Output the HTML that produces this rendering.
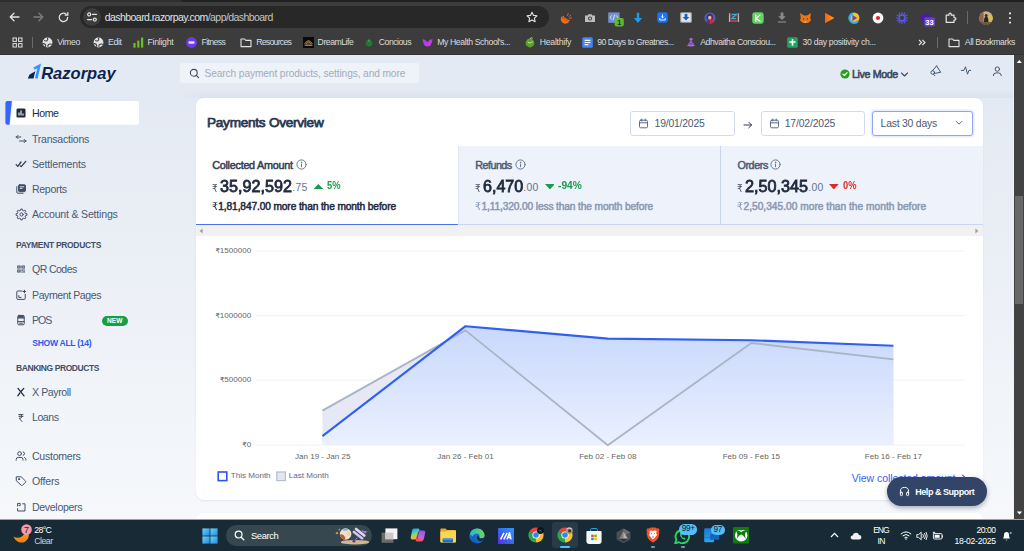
<!DOCTYPE html>
<html lang="en">
<head>
<meta charset="utf-8">
<title>Razorpay Dashboard</title>
<style>
*{box-sizing:border-box;margin:0;padding:0}
html,body{width:1024px;height:551px;overflow:hidden;background:#e4eaf3;font-family:"Liberation Sans",Arial,sans-serif;}
.abs{position:absolute}
#root{position:relative;width:1024px;height:551px;overflow:hidden;background:#e4eaf3}
/* ---------- browser chrome ---------- */
#chrome{position:absolute;left:0;top:0;width:1024px;height:55px;background:#3c3c3c;color:#e8e8e8}
#tabstrip{position:absolute;left:0;top:0;width:1024px;height:1.5px;background:linear-gradient(90deg,#2e2e2e 0,#2e2e2e 180px,#202020 184px)}
#omni{position:absolute;left:80px;top:6px;width:469px;height:22px;border-radius:11px;background:#282828}
#omni .site{position:absolute;left:3px;top:2px;width:18px;height:18px;border-radius:9px;background:#3c3c3c}
#url{position:absolute;left:24.8px;top:4px;font-size:10.5px;line-height:14px;color:#e2e2e2;letter-spacing:-0.565px;white-space:nowrap}
#url span{color:#c4c4c4}
.bm{position:absolute;top:36px;font-size:9.6px;line-height:12px;color:#dcdcdc;white-space:nowrap;letter-spacing:-0.15px}
/* ---------- page ---------- */
#page{position:absolute;left:0;top:55px;width:1013.5px;height:464px;background:linear-gradient(180deg,#e4eaf3 0px,#e4eaf3 45px,#f6f8fb 464px);overflow:hidden;border-right:1px solid #edf2fa}
#vscroll{position:absolute;left:1013.5px;top:55px;width:10.5px;height:464px;background:#424242}
#vscroll .thumb{position:absolute;left:1px;top:141px;width:8.5px;height:108px;background:#686868}
.nav{position:absolute;left:32px;font-size:10.6px;line-height:14px;color:#4a5a73;white-space:nowrap}
.navh{position:absolute;left:16px;font-size:8.5px;line-height:10px;font-weight:bold;color:#3f4f68;white-space:nowrap;letter-spacing:0.1px}
.ico{position:absolute;left:15px;width:12px;height:12px}
#card{position:absolute;left:196px;top:43px;width:787px;height:402px;background:#fff;border-radius:8px;box-shadow:0 1px 2px rgba(120,140,180,.16)}
.tab{position:absolute;top:48px;height:78px}
.tl{position:absolute;left:16px;top:12px;font-size:10.4px;line-height:13px;color:#3a4861;font-weight:bold;white-space:nowrap}
.amt{position:absolute;left:16px;top:29px;height:22px;white-space:nowrap;color:#1f2a3d}
.sub{position:absolute;left:16px;top:54px;font-size:10.1px;line-height:13px;white-space:nowrap}
.ax{font-family:"Liberation Sans",Arial,sans-serif;font-size:8.05px;fill:#666}
/* ---------- taskbar ---------- */
#taskbar{position:absolute;left:0;top:519px;width:1024px;height:32px;background:#172a35;color:#fff}
</style>
</head>
<body>
<div id="root">

<!-- ================= BROWSER CHROME ================= -->
<div id="chrome">
  <div id="tabstrip"></div><div class="abs" style="left:0;top:54px;width:1024px;height:1px;background:#343434"></div>
  <div id="omni">
    <div class="site"></div>
    <div id="url">dashboard.razorpay.com<span>/app/dashboard</span></div>
  </div>
  <!--CHROME-ICONS-->
<svg class="abs" style="left:8px;top:11px" width="13" height="12" viewBox="0 0 13 12" fill="none" stroke="#e3e3e3" stroke-width="1.3" stroke-linecap="round" stroke-linejoin="round"><path d="M11 6 H2.4 M6 2.2 L2.2 6 L6 9.8"/></svg>
<svg class="abs" style="left:32px;top:11px" width="13" height="12" viewBox="0 0 13 12" fill="none" stroke="#7d7d7d" stroke-width="1.3" stroke-linecap="round" stroke-linejoin="round"><path d="M2 6 H10.6 M7 2.2 L10.8 6 L7 9.8"/></svg>
<svg class="abs" style="left:56.5px;top:10.5px" width="13" height="13" viewBox="0 0 13 13" fill="none" stroke="#e3e3e3" stroke-width="1.3" stroke-linecap="round" stroke-linejoin="round"><path d="M10.6 6.5 A4.2 4.2 0 1 1 9.2 3.3"/><path d="M10.8 1.6 V4.2 H8.2" /></svg>
<svg class="abs" style="left:85.6px;top:11.4px" width="12" height="12" viewBox="0 0 12 12" fill="none" stroke="#e3e3e3" stroke-width="1.2" stroke-linecap="round"><circle cx="3.2" cy="3.4" r="1.5"/><path d="M6.4 3.4 H10.4"/><circle cx="8.8" cy="8.6" r="1.5"/><path d="M1.6 8.6 H5.6"/></svg>
<svg class="abs" style="left:526.2px;top:11px" width="12" height="12" viewBox="0 0 12 12" fill="none" stroke="#e3e3e3" stroke-width="1.1" stroke-linejoin="round"><path d="M6 1.2 L7.5 4.4 L11 4.8 L8.4 7.2 L9.1 10.7 L6 8.9 L2.9 10.7 L3.6 7.2 L1 4.8 L4.5 4.4 Z"/></svg>
<svg class="abs" style="left:559.7px;top:11.6px" width="12" height="12" viewBox="0 0 12 12" ><path d="M1.6 4.6 A4.5 4.5 0 1 0 9.2 9.4 Q4.4 8.8 1.6 4.6Z" fill="#f26a1b"/><path d="M2.6 4.2 Q5 8 9.6 8.6" stroke="#f26a1b" stroke-width="1.3" fill="none"/><path d="M7.4 3.4 L8.2 1.6 M9 4.6 L10.6 3.2 M9.8 6.4 L11.6 5.8" stroke="#f26a1b" stroke-width="1" stroke-linecap="round"/></svg>
<svg class="abs" style="left:583.8px;top:12.6px" width="12" height="10" viewBox="0 0 12 10" ><path d="M1 2.6 H3.6 L4.4 1.2 H7.6 L8.4 2.6 H11 V9 H1Z" fill="#bdbdbd"/><circle cx="6" cy="5.6" r="2" fill="#3c3c3c"/><circle cx="6" cy="5.6" r="1.1" fill="#bdbdbd"/></svg>
<svg class="abs" style="left:608.0px;top:11.7px" width="16" height="15" viewBox="0 0 16 15" ><rect x="0.2" y="0.4" width="11.4" height="10.4" fill="#6f8fd0"/><path d="M3.6 3.4 L2 5.4 L3.6 7.4 M8.2 3.4 L9.8 5.4 L8.2 7.4 M6.6 2.6 L5.2 8.2" stroke="#e8eefc" stroke-width="0.9" fill="none"/><rect x="6.6" y="6" width="9.2" height="8.6" rx="2" fill="#5fb82e"/><text x="11.2" y="13" font-size="7.4" font-weight="bold" fill="#16330a" text-anchor="middle" font-family="Liberation Sans, sans-serif">1</text></svg>
<svg class="abs" style="left:632.6px;top:11.6px" width="10" height="12" viewBox="0 0 10 12" ><path d="M3.8 0.8 H6.2 V6 H9.2 L5 11 L0.8 6 H3.8Z" fill="#1e9be8"/></svg>
<svg class="abs" style="left:656.7px;top:12.1px" width="11" height="11" viewBox="0 0 11 11" ><rect x="0.3" y="0.3" width="10.4" height="10.4" rx="2.4" fill="#1a73ff"/><path d="M5.5 2.4 V5.6 M4.2 4.6 L5.5 5.9 L6.8 4.6 M2.8 6 V8 H8.2 V6" stroke="#fff" stroke-width="0.9" fill="none"/></svg>
<svg class="abs" style="left:679.6px;top:12.1px" width="12" height="11" viewBox="0 0 12 11" ><rect x="0.7" y="0.7" width="10.6" height="9.6" rx="0.8" fill="#e4e6e8" stroke="#9aa0a6" stroke-width="1.1"/><path d="M4.6 2 H7.4 V5 H9.4 L6 8.6 L2.6 5 H4.6Z" fill="#1565c0"/></svg>
<svg class="abs" style="left:703.7px;top:11.6px" width="12" height="12" viewBox="0 0 12 12" ><defs><clipPath id="a7"><circle cx="6" cy="6" r="5.6"/></clipPath></defs><circle cx="6" cy="6" r="5.6" fill="#3b63d6"/><g clip-path="url(#a7)"><path d="M2.6 6.4 Q2.2 2 6 1.8 Q9.4 2 9 6.6 L7.6 8 H4Z" fill="#5a2848"/><ellipse cx="5.8" cy="5.8" rx="1.7" ry="2" fill="#e8b4a4"/><rect x="5.6" y="7.6" width="5" height="4.6" fill="#d02a3a"/><rect x="2.6" y="8.4" width="3.4" height="4" fill="#7a2a5a"/></g></svg>
<svg class="abs" style="left:728.0px;top:12.1px" width="12" height="11" viewBox="0 0 12 11" ><path d="M1.6 1.2 V10 M10.4 1.2 V10" stroke="#b8b8b8" stroke-width="1.4"/><path d="M1.6 2.6 Q6 6.4 10.4 2.6" stroke="#e03048" stroke-width="1.1" fill="none"/><path d="M3.6 2.4 H8.2 L3.8 6.6 H8.4" stroke="#2ab4d8" stroke-width="1.3" fill="none"/><rect x="2.6" y="8.2" width="6.8" height="1.8" fill="#e03048"/></svg>
<svg class="abs" style="left:751.9px;top:11.6px" width="12" height="12" viewBox="0 0 12 12" ><rect x="0.3" y="0.3" width="11.4" height="11.4" rx="2.6" fill="#66d166"/><path d="M3.8 2.6 V9.4 M8.4 2.6 L4.2 6.4 L8.6 9.4" stroke="#fff" stroke-width="1.2" fill="none"/></svg>
<svg class="abs" style="left:776.8px;top:12.1px" width="10" height="11" viewBox="0 0 10 11" ><path d="M3.6 0.6 H6.4 V4.2 H8.8 L5 8 L1.2 4.2 H3.6Z" fill="#8a8a8a"/><path d="M1 10 H9" stroke="#8a8a8a" stroke-width="1.2"/></svg>
<svg class="abs" style="left:799.4px;top:11.6px" width="13" height="12" viewBox="0 0 13 12" ><path d="M1 1 L5 3.4 H8 L12 1 L11.2 6 L12 8.4 L9 11 H4 L1 8.4 L1.8 6 Z" fill="#e8761b"/><path d="M4 6.6 L5.2 7.4 M9 6.6 L7.8 7.4" stroke="#3a2a20" stroke-width="1"/><path d="M5 9.6 H8 L6.5 11Z" fill="#d5c0b0"/></svg>
<svg class="abs" style="left:824.0px;top:11.6px" width="11" height="12" viewBox="0 0 11 12" ><defs><linearGradient id="pl" x1="0" y1="0" x2="1" y2="0"><stop offset="0" stop-color="#ff5a1a"/><stop offset="1" stop-color="#ffa400"/></linearGradient></defs><path d="M1 0.8 L10.4 6 L1 11.2Z" fill="url(#pl)"/></svg>
<svg class="abs" style="left:847.6px;top:11.6px" width="12" height="12" viewBox="0 0 12 12" ><circle cx="6.2" cy="5.8" r="5.2" fill="#ffc21a"/><path d="M5 1.4 A4.8 4.8 0 1 0 10 9" stroke="#22b8e8" stroke-width="2.2" fill="none"/><path d="M4.4 3 L9.2 6 L4.4 9Z" fill="#6a3fe0"/></svg>
<svg class="abs" style="left:871.8px;top:11.6px" width="12" height="12" viewBox="0 0 12 12" ><circle cx="6" cy="6" r="5.4" fill="#fff"/><circle cx="6" cy="6" r="2.1" fill="#e8202a"/></svg>
<svg class="abs" style="left:896.4px;top:11.6px" width="12" height="12" viewBox="0 0 12 12" ><circle cx="6" cy="6" r="2.9" fill="none" stroke="#5d58e6" stroke-width="1.5"/><path d="M9.90 6.00 L11.60 6.00 M9.38 7.95 L10.85 8.80 M7.95 9.38 L8.80 10.85 M6.00 9.90 L6.00 11.60 M4.05 9.38 L3.20 10.85 M2.62 7.95 L1.15 8.80 M2.10 6.00 L0.40 6.00 M2.62 4.05 L1.15 3.20 M4.05 2.62 L3.20 1.15 M6.00 2.10 L6.00 0.40 M7.95 2.62 L8.80 1.15 M9.38 4.05 L10.85 3.20" stroke="#5d58e6" stroke-width="1.15" stroke-linecap="round"/></svg>
<svg class="abs" style="left:918.5px;top:11.5px" width="17" height="15" viewBox="0 0 17 15" ><path d="M0.8 6.4 L6.6 0.8 L12 3.6 L9.4 9 L3 9.6Z" fill="#4a1aa8"/><rect x="5.2" y="5.2" width="10.8" height="9.2" rx="1.6" fill="#6a3fc8"/><text x="10.6" y="12.6" font-size="7.6" font-weight="bold" fill="#fff" text-anchor="middle" font-family="Liberation Sans, sans-serif">33</text></svg>
<svg class="abs" style="left:943.6px;top:11.1px" width="13" height="13" viewBox="0 0 13 13" ><path d="M2.2 4.2 H4.9 V3.5 Q4.9 2 6.1 2 Q7.3 2 7.3 3.5 V4.2 H10 V6.5 H10.5 Q11.9 6.5 11.9 7.8 Q11.9 9.1 10.5 9.1 H10 V11.4 H2.2Z" fill="none" stroke="#e3e3e3" stroke-width="1.25" stroke-linejoin="round"/></svg>
<div class="abs" style="left:967.4px;top:11px;width:1px;height:13px;background:#6a6a6a"></div>
<svg class="abs" style="left:978.7px;top:10.6px" width="14" height="14" viewBox="0 0 14 14" ><defs><clipPath id="av"><circle cx="7" cy="7" r="6.8"/></clipPath></defs><g clip-path="url(#av)"><rect width="14" height="14" fill="#c8b48a"/><rect x="0" y="0" width="4.6" height="14" fill="#8a6a4a"/><rect x="9.6" y="4" width="4.4" height="5" fill="#d8c23a"/><ellipse cx="7.2" cy="10" rx="2.2" ry="4.6" fill="#2a2622"/><circle cx="7.2" cy="4.6" r="1.5" fill="#3a3028"/><rect x="0" y="11" width="14" height="3" fill="#6a5a3a"/></g></svg>
<svg class="abs" style="left:1007.6px;top:10.6px" width="4" height="14" viewBox="0 0 4 14" ><circle cx="2" cy="2.4" r="1.1" fill="#e3e3e3"/><circle cx="2" cy="7" r="1.1" fill="#e3e3e3"/><circle cx="2" cy="11.6" r="1.1" fill="#e3e3e3"/></svg>
<!--/CHROME-ICONS-->
  <!--BOOKMARKS-->
<svg class="abs" style="left:11.7px;top:36.5px" width="11" height="11" viewBox="0 0 11 11" ><g fill="none" stroke="#e3e3e3" stroke-width="1"><rect x="1" y="1" width="3.4" height="3.4"/><rect x="6.6" y="1" width="3.4" height="3.4"/><rect x="1" y="6.6" width="3.4" height="3.4"/><rect x="6.6" y="6.6" width="3.4" height="3.4"/></g></svg>
<div class="abs" style="left:32.2px;top:37px;width:1px;height:10.5px;background:#6a6a6a"></div>
<svg class="abs" style="left:42.4px;top:36.5px" width="11" height="11" viewBox="0 0 11 11" ><circle cx="5.5" cy="5.5" r="4.9" fill="#e3e3e3"/><path d="M2.2 3.4 Q4 4.6 5 3.6 Q6.4 2.2 5.2 1 M6 10 Q5.4 8 7 7.2 Q9 6.6 10 7.4 M1 6.6 Q3 6.4 3.6 8 Q4 9.2 3.4 9.8" stroke="#3c3c3c" stroke-width="1.1" fill="none"/></svg>
<div class="bm" style="left:57.2px;font-size:8.7px;letter-spacing:-0.341px">Vimeo</div>
<svg class="abs" style="left:93.1px;top:36.5px" width="11" height="11" viewBox="0 0 11 11" ><circle cx="5.5" cy="5.5" r="4.9" fill="#e3e3e3"/><path d="M2.2 3.4 Q4 4.6 5 3.6 Q6.4 2.2 5.2 1 M6 10 Q5.4 8 7 7.2 Q9 6.6 10 7.4 M1 6.6 Q3 6.4 3.6 8 Q4 9.2 3.4 9.8" stroke="#3c3c3c" stroke-width="1.1" fill="none"/></svg>
<div class="bm" style="left:108.0px;font-size:8.7px;letter-spacing:-0.373px">Edit</div>
<svg class="abs" style="left:132.7px;top:36.5px" width="11" height="11" viewBox="0 0 11 11" ><rect x="0.4" y="6" width="2.2" height="4.6" fill="#6ac21a"/><rect x="4.2" y="3.6" width="2.2" height="7" fill="#6ac21a"/><rect x="8" y="0.6" width="2.2" height="10" fill="#6ac21a"/></svg>
<div class="bm" style="left:147.5px;font-size:8.7px;letter-spacing:-0.268px">Finlight</div>
<svg class="abs" style="left:186.4px;top:36.5px" width="11" height="11" viewBox="0 0 11 11" ><circle cx="5.5" cy="5.5" r="5.4" fill="#6a3de8"/><rect x="2.4" y="4.2" width="6.2" height="2.6" rx="1.2" fill="#e6dcff"/></svg>
<div class="bm" style="left:201.6px;font-size:8.7px;letter-spacing:-0.634px">Fitness</div>
<svg class="abs" style="left:239.7px;top:36.5px" width="12" height="11" viewBox="0 0 12 11" ><path d="M1 2 H4.6 L5.8 3.4 H11 V9.6 H1Z" fill="none" stroke="#e3e3e3" stroke-width="1.1" stroke-linejoin="round"/></svg>
<div class="bm" style="left:256.2px;font-size:8.7px;letter-spacing:-0.732px">Resources</div>
<svg class="abs" style="left:303.0px;top:36.5px" width="11" height="11" viewBox="0 0 11 11" ><rect width="11" height="11" fill="#0a0a0a"/><path d="M1.6 7 Q5.5 0.4 9.4 7 M3 7 Q5.5 2.8 8 7 M4.4 7 Q5.5 5 6.6 7" stroke="#c89a32" stroke-width="0.9" fill="none"/><path d="M1.6 8.2 H9.4" stroke="#c89a32" stroke-width="1.2"/></svg>
<div class="bm" style="left:317.6px;font-size:8.7px;letter-spacing:-0.481px">DreamLife</div>
<svg class="abs" style="left:365.2px;top:37.9px" width="8" height="9" viewBox="0 0 8 9" ><path d="M4 0.4 L5.4 2 Q7.6 3.4 7.4 5.8 Q7 8.6 4 8.6 Q1 8.6 0.6 5.8 Q0.4 3.4 2.6 2Z" fill="#1f7a30"/><path d="M4 1.6 L5.2 3.4 H2.8Z" fill="#4aa84a"/></svg>
<div class="bm" style="left:378.8px;font-size:8.7px;letter-spacing:-0.496px">Concious</div>
<svg class="abs" style="left:421.8px;top:37.5px" width="11" height="9" viewBox="0 0 11 9" ><defs><linearGradient id="bf" x1="0" y1="0" x2="1" y2="1"><stop offset="0" stop-color="#9a3af0"/><stop offset="1" stop-color="#d83ae0"/></linearGradient></defs><path d="M5.5 8.4 Q1.4 8.8 0.4 1 Q3.8 1.4 5.5 4.2 Q7.2 1.4 10.6 1 Q9.6 8.8 5.5 8.4Z" fill="url(#bf)"/></svg>
<div class="bm" style="left:437.2px;font-size:8.7px;letter-spacing:-0.402px">My Health School's...</div>
<svg class="abs" style="left:525.2px;top:36.5px" width="10" height="11" viewBox="0 0 10 11" ><circle cx="5" cy="6" r="4.4" fill="#5aa02c"/><path d="M5 1.6 Q6.6 0.4 7.6 1 M2.8 5 Q5 7.6 7.6 4.6" stroke="#d8e8b8" stroke-width="0.9" fill="none"/></svg>
<div class="bm" style="left:539.8px;font-size:8.7px;letter-spacing:-0.272px">Healthify</div>
<svg class="abs" style="left:581.8px;top:36.5px" width="11" height="11" viewBox="0 0 11 11" ><rect x="0.2" y="0.2" width="10.6" height="10.6" rx="1.6" fill="#4285f4"/><path d="M2.6 3.4 H8.4 M2.6 5.5 H8.4 M2.6 7.6 H6.4" stroke="#fff" stroke-width="1.1"/></svg>
<div class="bm" style="left:597.2px;font-size:8.7px;letter-spacing:-0.475px">90 Days to Greatnes...</div>
<svg class="abs" style="left:685.7px;top:37.0px" width="10" height="10" viewBox="0 0 10 10" ><circle cx="5" cy="2.2" r="1.5" fill="#a866f0"/><path d="M5 3.4 L8.2 7.6 H1.8Z" fill="#a866f0"/><path d="M0.6 8.4 Q5 6 9.4 8.4 Q5 10.4 0.6 8.4Z" fill="#a866f0"/><path d="M3.6 6.4 H6.4" stroke="#3c3c3c" stroke-width=".7"/></svg>
<div class="bm" style="left:700.2px;font-size:8.7px;letter-spacing:-0.435px">Adhvaitha Consciou...</div>
<svg class="abs" style="left:787.3px;top:36.5px" width="11" height="11" viewBox="0 0 11 11" ><rect x="0.2" y="0.2" width="10.6" height="10.6" rx="1.4" fill="#1fa463"/><path d="M5.5 2.2 V8.8 M2.4 5 H8.6" stroke="#fff" stroke-width="1.6"/></svg>
<div class="bm" style="left:802.6px;font-size:8.7px;letter-spacing:-0.328px">30 day positivity ch...</div>
<svg class="abs" style="left:917.8px;top:38.5px" width="8" height="7" viewBox="0 0 8 7" ><path d="M1 1 L3.6 3.5 L1 6 M4.4 1 L7 3.5 L4.4 6" fill="none" stroke="#e3e3e3" stroke-width="1.1"/></svg>
<div class="abs" style="left:937.4px;top:37px;width:1px;height:10.5px;background:#6a6a6a"></div>
<svg class="abs" style="left:947.8px;top:36.5px" width="12" height="11" viewBox="0 0 12 11" ><path d="M1 2 H4.6 L5.8 3.4 H11 V9.6 H1Z" fill="none" stroke="#e3e3e3" stroke-width="1.1" stroke-linejoin="round"/></svg>
<div class="bm" style="left:964.8px;font-size:8.7px;letter-spacing:-0.423px">All Bookmarks</div>
<!--/BOOKMARKS-->
</div>

<!-- ================= PAGE ================= -->
<div id="page">
  
  <!-- header -->
  <svg class="abs" style="left:24px;top:4px" width="100" height="30" viewBox="24 59 100 30">
    <polygon points="41,63.5 33.4,67.6 34.4,69.8 37.3,68.3 34.9,78.6 37.7,78.6" fill="#3395ff"/>
    <polygon points="27.7,78.6 29.6,74.4 35.3,71.2 33.5,78.6" fill="#0c2451"/>
    <text x="41.2" y="78.5" font-family="Liberation Sans, Arial, sans-serif" font-weight="bold" font-style="italic" font-size="16.2" fill="#0c2451" textLength="74.4" lengthAdjust="spacingAndGlyphs">Razorpay</text>
  </svg>
  <div class="abs" style="left:180px;top:7.5px;width:239px;height:20.5px;background:#eef2f9;border-radius:2px"></div>
  <svg class="abs" style="left:189px;top:12.5px" width="11" height="11" viewBox="0 0 11 11"><circle cx="4.8" cy="4.8" r="3.4" fill="none" stroke="#3b4a5f" stroke-width="1.1"/><path d="M7.3 7.3 L9.6 9.6" stroke="#3b4a5f" stroke-width="1.1" stroke-linecap="round"/></svg>
  <div class="abs" style="left:204.5px;top:11.8px;font-size:10.2px;line-height:14px;color:#a3acb9;white-space:nowrap;letter-spacing:-0.112px">Search payment products, settings, and more</div>
  <svg class="abs" style="left:840px;top:14px" width="10" height="10" viewBox="0 0 10 10"><circle cx="5" cy="5" r="4.6" fill="#2a9d1f"/><path d="M2.9 5.1 L4.4 6.5 L7.1 3.6" fill="none" stroke="#fff" stroke-width="1.2" stroke-linecap="round" stroke-linejoin="round"/></svg>
  <div class="abs" style="left:852px;top:11.5px;font-size:10.7px;line-height:14px;color:#3a4a63;-webkit-text-stroke:0.6px #3a4a63;white-space:nowrap;letter-spacing:-0.374px">Live Mode</div>
  <svg class="abs" style="left:900px;top:15.5px" width="9" height="7" viewBox="0 0 9 7"><path d="M1.5 2 L4.5 5 L7.5 2" fill="none" stroke="#3a4a63" stroke-width="1.1" stroke-linecap="round" stroke-linejoin="round"/></svg>
  <svg class="abs" style="left:929px;top:8px" width="14" height="14" viewBox="929 63 14 14" fill="none" stroke="#46586f" stroke-width="1" stroke-linejoin="round" stroke-linecap="round"><path d="M936.6 65.9 L940.7 72.3 L934.6 73.4 M936.6 65.9 L932.4 70.8"/><circle cx="932.7" cy="72.5" r="1.8"/><path d="M933.6 74.4 L934.9 75.8"/></svg>
  <svg class="abs" style="left:960px;top:8px" width="12" height="14" viewBox="960 63 12 14" fill="none" stroke="#46586f" stroke-width="1" stroke-linejoin="round" stroke-linecap="round"><path d="M961.3 70.4 H963.9 L965.5 66.8 L967.5 74.2 L968.9 70.4 H970.7"/></svg>
  <svg class="abs" style="left:991px;top:8px" width="13" height="14" viewBox="991 63 13 14" fill="none" stroke="#46586f" stroke-width="1" stroke-linecap="round"><circle cx="997.3" cy="69.1" r="2.2"/><path d="M993.3 75.6 Q993.3 72.9 996 72.9 H998.6 Q1001.3 72.9 1001.3 75.6"/></svg>
  <div class="abs" style="left:182px;top:34px;width:832px;height:9px;background:linear-gradient(rgba(219,226,237,0),#dbe2ed);-webkit-mask-image:linear-gradient(90deg,transparent,#000 24px);mask-image:linear-gradient(90deg,transparent,#000 24px)"></div>

  <!--SIDEBAR-->
<svg class="abs" style="left:5px;top:45px" width="136" height="26" viewBox="0 0 136 26"><path d="M7.6 1 H131.5 Q134 1 134 3.5 V22.2 Q134 24.7 131.5 24.7 H5.3 Z" fill="#fff"/><path d="M2.4 1 H6.8 L4.5 24.7 H2.4 Q0.4 24.7 0.4 22.7 V3 Q0.4 1 2.4 1Z" fill="#3366ff"/></svg>
<div class="nav" style="top:51.0px;letter-spacing:-0.436px;color:#1f2a3d;">Home</div>
<div class="nav" style="top:76.5px;letter-spacing:-0.263px">Transactions</div>
<div class="nav" style="top:101.5px;letter-spacing:-0.192px">Settlements</div>
<div class="nav" style="top:127.0px;letter-spacing:-0.345px">Reports</div>
<div class="nav" style="top:152.0px;letter-spacing:-0.215px">Account &amp; Settings</div>
<div class="nav" style="top:207.4px;letter-spacing:-0.607px">QR Codes</div>
<div class="nav" style="top:232.5px;letter-spacing:-0.440px">Payment Pages</div>
<div class="nav" style="top:257.8px;letter-spacing:-1.088px">POS</div>
<div class="nav" style="top:330.3px;letter-spacing:-0.413px">X Payroll</div>
<div class="nav" style="top:355.3px;letter-spacing:-0.467px">Loans</div>
<div class="nav" style="top:394.3px;letter-spacing:-0.287px">Customers</div>
<div class="nav" style="top:419.3px;letter-spacing:-0.205px">Offers</div>
<div class="nav" style="top:444.9px;letter-spacing:-0.340px">Developers</div>
<div class="navh" style="top:184.9px;letter-spacing:-0.325px">PAYMENT PRODUCTS</div>
<div class="navh" style="top:308.2px;letter-spacing:-0.420px">BANKING PRODUCTS</div>
<div class="abs" style="left:32.3px;top:282.9px;font-size:8.6px;line-height:10px;font-weight:bold;color:#2f5cf0;white-space:nowrap;letter-spacing:-0.313px">SHOW ALL (14)</div>
<div class="abs" style="left:101.6px;top:260.6px;width:26.4px;height:10.2px;border-radius:5.1px;background:#14a049;color:#fff;font-size:6.6px;line-height:10.4px;font-weight:bold;text-align:center">NEW</div>
<svg class="abs" style="left:15.2px;top:52.0px" width="12" height="12" viewBox="0 0 12 12" fill="none" stroke="#3f4d63" stroke-width="1" stroke-linecap="round" stroke-linejoin="round"><rect x="1.5" y="1.5" width="9" height="9" rx="1.3" fill="#1f2a3d" stroke="none"/><path d="M4 8.6 V5.4 M6 8.6 V3.6 M8 8.6 V6.6" stroke="#fff" stroke-width="1.1" stroke-linecap="butt"/></svg>
<svg class="abs" style="left:15.2px;top:77.5px" width="12" height="12" viewBox="0 0 12 12" fill="none" stroke="#3f4d63" stroke-width="1" stroke-linecap="round" stroke-linejoin="round"><path d="M1.4 4 H5.8 M1.4 4 L3 2.4 M1.4 4 L3 5.6 M4.6 8 H10.8 M10.8 8 L9.2 6.4 M10.8 8 L9.2 9.6"/></svg>
<svg class="abs" style="left:15.2px;top:102.8px" width="12" height="12" viewBox="0 0 12 12" fill="none" stroke="#3f4d63" stroke-width="1" stroke-linecap="round" stroke-linejoin="round"><path d="M1.2 6.6 L2.8 8.4 L6 4 M5.4 8 L6.2 8.6 L10.8 3.4" stroke-width="1.3" stroke="#2f3b50"/></svg>
<svg class="abs" style="left:15.2px;top:128.0px" width="12" height="12" viewBox="0 0 12 12" fill="none" stroke="#3f4d63" stroke-width="1" stroke-linecap="round" stroke-linejoin="round"><path d="M1.8 3.6 V9.4 Q1.8 10.2 2.6 10.2 H8.2"/><rect x="3.6" y="1.8" width="6.8" height="6.8" rx="0.8" fill="#3f4d63"/><path d="M5.2 3.8 H8.8 M5.2 5.4 H7" stroke="#e9eef5" stroke-width="0.9"/></svg>
<svg class="abs" style="left:14.7px;top:152.8px" width="13" height="13" viewBox="0 0 13 13" fill="none" stroke="#3f4d63" stroke-width="1" stroke-linecap="round" stroke-linejoin="round"><circle cx="6.5" cy="6.5" r="1.6"/><path d="M10.70 5.58 L11.95 5.75 L11.95 7.25 L10.70 7.42 L10.12 8.82 L10.89 9.82 L9.82 10.89 L8.82 10.12 L7.42 10.70 L7.25 11.95 L5.75 11.95 L5.58 10.70 L4.18 10.12 L3.18 10.89 L2.11 9.82 L2.88 8.82 L2.30 7.42 L1.05 7.25 L1.05 5.75 L2.30 5.58 L2.88 4.18 L2.11 3.18 L3.18 2.11 L4.18 2.88 L5.58 2.30 L5.75 1.05 L7.25 1.05 L7.42 2.30 L8.82 2.88 L9.82 2.11 L10.89 3.18 L10.12 4.18Z"/></svg>
<svg class="abs" style="left:15.2px;top:208.0px" width="12" height="12" viewBox="0 0 12 12" fill="none" stroke="#3f4d63" stroke-width="1" stroke-linecap="round" stroke-linejoin="round"><g fill="#3f4d63" stroke="none"><rect x="2.2" y="2.4" width="3.4" height="3.2" rx=".4"/><rect x="6.4" y="2.4" width="3.4" height="3.2" rx=".4"/><rect x="2.2" y="6.4" width="3.4" height="3.2" rx=".4"/><rect x="6.4" y="6.4" width="1.5" height="1.4"/><rect x="8.3" y="8.2" width="1.5" height="1.4"/><rect x="8.3" y="6.4" width="1.5" height="1.2"/><rect x="6.4" y="8.4" width="1.3" height="1.2"/></g><g fill="#e7ecf4" stroke="none"><rect x="3.3" y="3.4" width="1.2" height="1.2"/><rect x="7.5" y="3.4" width="1.2" height="1.2"/><rect x="3.3" y="7.4" width="1.2" height="1.2"/></g></svg>
<svg class="abs" style="left:15.2px;top:233.5px" width="12" height="12" viewBox="0 0 12 12" fill="none" stroke="#3f4d63" stroke-width="1" stroke-linecap="round" stroke-linejoin="round"><path d="M7 2 H2.6 Q1.8 2 1.8 2.8 V9.6 Q1.8 10.4 2.6 10.4 H9.4 Q10.2 10.4 10.2 9.6 V5.4 M9.4 1.2 V3.8 M8.1 2.5 H10.7 M3.8 6.6 V8.4 H6"/></svg>
<svg class="abs" style="left:15.2px;top:259.0px" width="12" height="12" viewBox="0 0 12 12" fill="none" stroke="#3f4d63" stroke-width="1" stroke-linecap="round" stroke-linejoin="round"><rect x="2.8" y="1.4" width="6.4" height="9.4" rx="1"/><path d="M2.8 4 H9.2 M2.8 7.6 H9.2 M4.6 9.2 H7.4" /><rect x="3.2" y="1.6" width="5.6" height="2.2" fill="#3f4d63" stroke="none"/></svg>
<svg class="abs" style="left:15.2px;top:331.0px" width="12" height="12" viewBox="0 0 12 12" fill="none" stroke="#3f4d63" stroke-width="1" stroke-linecap="round" stroke-linejoin="round"><path d="M3 2.4 L9 9.8 M8.8 2.4 L5.8 5.8 M4.8 7 L2.8 9.8" stroke-width="1.3" stroke="#1f2a3d"/></svg>
<svg class="abs" style="left:15.2px;top:356.6px" width="12" height="12" viewBox="0 0 12 12" fill="none" stroke="#3f4d63" stroke-width="1" stroke-linecap="round" stroke-linejoin="round"><path d="M4 2.6 H8 M4 4.4 H8 M4 2.6 H5 Q6.8 2.6 6.8 4.4 Q6.8 6.2 5 6.2 H4.2 L7 9.6" stroke-width="0.95"/></svg>
<svg class="abs" style="left:15.2px;top:395.0px" width="12" height="12" viewBox="0 0 12 12" fill="none" stroke="#3f4d63" stroke-width="1" stroke-linecap="round" stroke-linejoin="round"><circle cx="4.6" cy="3.6" r="1.9"/><path d="M1.2 10.2 V9.4 Q1.2 7.4 3.2 7.4 H6 Q8 7.4 8 9.4 V10.2 M8.2 1.9 Q9.6 2.3 9.6 3.6 Q9.6 4.9 8.2 5.3 M9.6 7.5 Q10.9 7.9 10.9 9.4 V10.2"/></svg>
<svg class="abs" style="left:15.2px;top:420.0px" width="12" height="12" viewBox="0 0 12 12" fill="none" stroke="#3f4d63" stroke-width="1" stroke-linecap="round" stroke-linejoin="round"><path d="M1.6 1.8 H6.2 L10.6 6.2 Q11 6.7 10.6 7.2 L7.4 10.4 Q6.9 10.8 6.4 10.4 L1.6 6 Z"/><circle cx="4" cy="4.2" r=".6" fill="#3f4d63"/></svg>
<svg class="abs" style="left:15.2px;top:445.6px" width="12" height="12" viewBox="0 0 12 12" fill="none" stroke="#3f4d63" stroke-width="1" stroke-linecap="round" stroke-linejoin="round"><path d="M7.6 2.8 H10 V10 H2.6 V7.6 M2.6 5 V2.4 H5.2 V4.6 H4"/></svg>
<!--/SIDEBAR-->
  <div id="card">
    <!--CARD-->
<div class="abs" style="left:11.0px;top:15.8px;font-size:13.6px;line-height:18px;font-weight:normal;color:#2a3850;letter-spacing:-0.260px;white-space:nowrap;-webkit-text-stroke:0.75px #2a3850;">Payments Overview</div>
<div class="abs" style="left:434.0px;top:12.5px;width:104.8px;height:25.0px;border:1px solid #d3dbea;border-radius:3px;background:#fff;"></div>
<svg class="abs" style="left:442.4px;top:19.5px" width="11" height="11" viewBox="0 0 11 11" fill="none" stroke="#5a6a85" stroke-width="1" stroke-linecap="round"><rect x="1.5" y="2.2" width="8" height="7.6" rx="1.2"/><path d="M1.5 4.8 H9.5 M3.8 1 V3 M7.2 1 V3"/></svg>
<div class="abs" style="left:458.6px;top:18.8px;font-size:10.4px;line-height:14px;font-weight:normal;color:#4a5a73;letter-spacing:-0.205px;white-space:nowrap;">19/01/2025</div>
<svg class="abs" style="left:547.4px;top:23.0px" width="10" height="8" viewBox="0 0 10 8" fill="none" stroke="#2f3b50" stroke-width="1" stroke-linecap="round" stroke-linejoin="round"><path d="M1 4 H8.6 M5.8 1.2 L8.6 4 L5.8 6.8"/></svg>
<div class="abs" style="left:564.5px;top:12.5px;width:104.5px;height:25.0px;border:1px solid #d3dbea;border-radius:3px;background:#fff;"></div>
<svg class="abs" style="left:572.5px;top:19.5px" width="11" height="11" viewBox="0 0 11 11" fill="none" stroke="#5a6a85" stroke-width="1" stroke-linecap="round"><rect x="1.5" y="2.2" width="8" height="7.6" rx="1.2"/><path d="M1.5 4.8 H9.5 M3.8 1 V3 M7.2 1 V3"/></svg>
<div class="abs" style="left:588.7px;top:18.8px;font-size:10.4px;line-height:14px;font-weight:normal;color:#4a5a73;letter-spacing:-0.145px;white-space:nowrap;">17/02/2025</div>
<div class="abs" style="left:676.0px;top:12.5px;width:101.0px;height:25.0px;border:1px solid #90a6f5;border-radius:3px;background:#fff;box-shadow:0 0 0 1.5px rgba(120,150,250,.18);"></div>
<div class="abs" style="left:684.6px;top:18.8px;font-size:10.4px;line-height:14px;font-weight:normal;color:#4a5a73;letter-spacing:-0.214px;white-space:nowrap;">Last 30 days</div>
<svg class="abs" style="left:759.0px;top:22.4px" width="8" height="6" viewBox="0 0 8 6" fill="none" stroke="#5a6a85" stroke-width="1" stroke-linecap="round" stroke-linejoin="round"><path d="M1.2 1.4 L4 4.2 L6.8 1.4"/></svg>
<div class="abs" style="left:262.2px;top:47.8px;width:524.6px;height:78.8px;background:#eef2fb;border-bottom:1px solid #c9d5f3;border-left:1px solid #dfe6f6"></div>
<div class="abs" style="left:524.2px;top:47.8px;width:1px;height:78.2px;background:#c9d3ea"></div>
<div class="abs" style="left:0;top:125.5px;width:262.4px;height:1.3px;background:#4a72f0"></div>
<div class="abs" style="left:0;top:127.0px;width:787px;height:11px;background:#f1f1f1"></div>
<svg class="abs" style="left:3.4px;top:129.6px" width="4" height="6" viewBox="0 0 4 6"><path d="M3.6 0.4 V5.6 L0.6 3Z" fill="#a0a0a0"/></svg>
<svg class="abs" style="left:779.0px;top:129.6px" width="4" height="6" viewBox="0 0 4 6"><path d="M0.4 0.4 V5.6 L3.4 3Z" fill="#a0a0a0"/></svg>
<div class="abs" style="left:16.2px;top:59.6px;font-size:10.8px;line-height:14px;font-weight:normal;color:#333f55;letter-spacing:-0.259px;white-space:nowrap;-webkit-text-stroke:0.5px #333f55;">Collected Amount</div>
<svg class="abs" style="left:99.8px;top:61.2px" width="11" height="11" viewBox="0 0 11 11" fill="none" stroke="#6b7a92" stroke-width="1" stroke-linecap="round"><circle cx="5.5" cy="5.5" r="4.6"/><path d="M5.5 5 V7.8"/><circle cx="5.5" cy="3.3" r=".3" fill="#6b7a92"/></svg>
<div class="abs" style="left:16.2px;top:82.8px;font-family:'DejaVu Sans',sans-serif;font-size:10.6px;line-height:14px;color:#4a5568;transform-origin:0 50%;transform:scaleX(0.831)">₹</div>
<div class="abs" style="left:24.0px;top:78.6px;font-size:15.7px;line-height:20px;font-weight:normal;color:#1f2a3d;letter-spacing:0.000px;white-space:nowrap;-webkit-text-stroke:0.8px #1f2a3d;transform-origin:0 50%;transform:scaleX(1.0308);">35,92,592</div>
<div class="abs" style="left:96.3px;top:83.0px;font-size:10.4px;line-height:14px;font-weight:normal;color:#66738a;letter-spacing:0.314px;white-space:nowrap;">.75</div>
<svg class="abs" style="left:116.8px;top:85.6px" width="10.7" height="5.6"><polygon points="5.3,0 10.7,5.6 0,5.6" fill="#1c9a4e"/></svg>
<div class="abs" style="left:130.7px;top:81.2px;font-size:10.4px;line-height:14px;font-weight:bold;color:#1c9a4e;letter-spacing:0.000px;white-space:nowrap;transform-origin:0 50%;transform:scaleX(0.9048);">5%</div>
<div class="abs" style="left:16.2px;top:102.0px;font-family:'DejaVu Sans',sans-serif;font-size:10.8px;line-height:14px;color:#1f2a3d;transform-origin:0 50%;transform:scaleX(0.874)">₹</div>
<div class="abs" style="left:22.3px;top:101.9px;font-size:10.2px;line-height:13px;font-weight:normal;color:#1f2a3d;letter-spacing:-0.124px;white-space:nowrap;-webkit-text-stroke:0.5px #1f2a3d;">1,81,847.00 more than the month before</div>
<div class="abs" style="left:279.3px;top:59.6px;font-size:10.8px;line-height:14px;font-weight:normal;color:#4d5c75;letter-spacing:-0.547px;white-space:nowrap;-webkit-text-stroke:0.5px #4d5c75;">Refunds</div>
<svg class="abs" style="left:318.5px;top:61.3px" width="11" height="11" viewBox="0 0 11 11" fill="none" stroke="#6b7a92" stroke-width="1" stroke-linecap="round"><circle cx="5.5" cy="5.5" r="4.6"/><path d="M5.5 5 V7.8"/><circle cx="5.5" cy="3.3" r=".3" fill="#6b7a92"/></svg>
<div class="abs" style="left:279.3px;top:82.8px;font-family:'DejaVu Sans',sans-serif;font-size:10.6px;line-height:14px;color:#4a5568;transform-origin:0 50%;transform:scaleX(0.831)">₹</div>
<div class="abs" style="left:286.7px;top:78.6px;font-size:15.7px;line-height:20px;font-weight:normal;color:#1f2a3d;letter-spacing:0.000px;white-space:nowrap;-webkit-text-stroke:0.8px #1f2a3d;transform-origin:0 50%;transform:scaleX(1.0257);">6,470</div>
<div class="abs" style="left:327.2px;top:83.0px;font-size:10.4px;line-height:14px;font-weight:normal;color:#66738a;letter-spacing:0.314px;white-space:nowrap;">.00</div>
<svg class="abs" style="left:348.6px;top:85.8px" width="9.8" height="5.5"><polygon points="0,0 9.8,0 4.9,5.5" fill="#1c9a4e"/></svg>
<div class="abs" style="left:362.0px;top:81.2px;font-size:10.4px;line-height:14px;font-weight:bold;color:#1c9a4e;letter-spacing:0.000px;white-space:nowrap;transform-origin:0 50%;transform:scaleX(0.9803);">-94%</div>
<div class="abs" style="left:279.3px;top:102.0px;font-family:'DejaVu Sans',sans-serif;font-size:10.8px;line-height:14px;color:#8a9ab3;transform-origin:0 50%;transform:scaleX(0.874)">₹</div>
<div class="abs" style="left:285.4px;top:101.9px;font-size:10.2px;line-height:13px;font-weight:normal;color:#8a9ab3;letter-spacing:-0.127px;white-space:nowrap;-webkit-text-stroke:0.5px #8a9ab3;">1,11,320.00 less than the month before</div>
<div class="abs" style="left:541.4px;top:59.6px;font-size:10.8px;line-height:14px;font-weight:normal;color:#4d5c75;letter-spacing:-0.401px;white-space:nowrap;-webkit-text-stroke:0.5px #4d5c75;">Orders</div>
<svg class="abs" style="left:574.4px;top:61.3px" width="11" height="11" viewBox="0 0 11 11" fill="none" stroke="#6b7a92" stroke-width="1" stroke-linecap="round"><circle cx="5.5" cy="5.5" r="4.6"/><path d="M5.5 5 V7.8"/><circle cx="5.5" cy="3.3" r=".3" fill="#6b7a92"/></svg>
<div class="abs" style="left:541.4px;top:82.8px;font-family:'DejaVu Sans',sans-serif;font-size:10.6px;line-height:14px;color:#4a5568;transform-origin:0 50%;transform:scaleX(0.831)">₹</div>
<div class="abs" style="left:548.8px;top:78.6px;font-size:15.7px;line-height:20px;font-weight:normal;color:#1f2a3d;letter-spacing:0.000px;white-space:nowrap;-webkit-text-stroke:0.8px #1f2a3d;transform-origin:0 50%;transform:scaleX(1.0341);">2,50,345</div>
<div class="abs" style="left:612.2px;top:83.0px;font-size:10.4px;line-height:14px;font-weight:normal;color:#66738a;letter-spacing:0.314px;white-space:nowrap;">.00</div>
<svg class="abs" style="left:633.2px;top:85.8px" width="9.7" height="5.5"><polygon points="0,0 9.7,0 4.8,5.5" fill="#dc2b26"/></svg>
<div class="abs" style="left:646.9px;top:81.2px;font-size:10.4px;line-height:14px;font-weight:bold;color:#dc2b26;letter-spacing:0.000px;white-space:nowrap;transform-origin:0 50%;transform:scaleX(0.8915);">0%</div>
<div class="abs" style="left:541.4px;top:102.0px;font-family:'DejaVu Sans',sans-serif;font-size:10.8px;line-height:14px;color:#8a9ab3;transform-origin:0 50%;transform:scaleX(0.874)">₹</div>
<div class="abs" style="left:547.5px;top:101.9px;font-size:10.2px;line-height:13px;font-weight:normal;color:#8a9ab3;letter-spacing:0.008px;white-space:nowrap;-webkit-text-stroke:0.5px #8a9ab3;">2,50,345.00 more than the month before</div>
<svg class="abs" style="left:0;top:0" width="787" height="402" viewBox="0 0 787 402">
<defs><linearGradient id="gb" x1="0" y1="0" x2="0" y2="1"><stop offset="0" stop-color="#c8d8fc"/><stop offset="1" stop-color="#eaf0fe"/></linearGradient></defs>
<line x1="60.0" y1="153.0" x2="769.0" y2="153.0" stroke="#f2f3f6" stroke-width="1"/>
<line x1="60.0" y1="217.6" x2="769.0" y2="217.6" stroke="#f2f3f6" stroke-width="1"/>
<line x1="60.0" y1="282.2" x2="769.0" y2="282.2" stroke="#f2f3f6" stroke-width="1"/>
<line x1="60.0" y1="347.2" x2="769.0" y2="347.2" stroke="#f2f3f6" stroke-width="1"/>
<polygon points="126.4,312.6 269.5,232.4 411.8,347.2 555.3,245.0 697.4,261.3 697.4,347.0 126.4,347.0" fill="#e6e9f5"/>
<polygon points="126.4,338.2 269.5,228.2 411.8,240.6 555.3,242.2 697.4,247.7 697.4,347.0 126.4,347.0" fill="url(#gb)"/>
<polyline points="126.4,312.6 269.5,232.4 411.8,347.2 555.3,245.0 697.4,261.3" fill="none" stroke="#a9b5c5" stroke-width="1.8" stroke-linejoin="round"/>
<polyline points="126.4,338.2 269.5,228.2 411.8,240.6 555.3,242.2 697.4,247.7" fill="none" stroke="#3060f0" stroke-width="2.1" stroke-linejoin="round"/>
<text class="ax" x="55.2" y="155.1" text-anchor="end"><tspan font-family="DejaVu Sans, sans-serif" font-size="6.9">₹</tspan>1500000</text>
<text class="ax" x="55.2" y="219.7" text-anchor="end"><tspan font-family="DejaVu Sans, sans-serif" font-size="6.9">₹</tspan>1000000</text>
<text class="ax" x="55.2" y="284.3" text-anchor="end"><tspan font-family="DejaVu Sans, sans-serif" font-size="6.9">₹</tspan>500000</text>
<text class="ax" x="55.2" y="349.1" text-anchor="end"><tspan font-family="DejaVu Sans, sans-serif" font-size="6.9">₹</tspan>0</text>
<text class="ax" x="126.7" y="361.3" text-anchor="middle">Jan 19 - Jan 25</text>
<text class="ax" x="269.5" y="361.3" text-anchor="middle">Jan 26 - Feb 01</text>
<text class="ax" x="411.8" y="361.3" text-anchor="middle">Feb 02 - Feb 08</text>
<text class="ax" x="555.3" y="361.3" text-anchor="middle">Feb 09 - Feb 15</text>
<text class="ax" x="697.4" y="361.3" text-anchor="middle">Feb 16 - Feb 17</text>
<rect x="22.2" y="374.0" width="8.6" height="8.6" fill="#fff" stroke="#2b54f5" stroke-width="1.6"/>
<rect x="80.8" y="374.0" width="8.6" height="8.6" fill="#e3e7ef" stroke="#b4bdcc" stroke-width="1.2"/>
<text class="ax" x="34.8" y="379.9" fill="#5a6b85" style="fill:#5a6b85">This Month</text>
<text class="ax" x="92.8" y="379.9" style="fill:#5a6b85">Last Month</text>
</svg>
<div class="abs" style="left:655.8px;top:372.5px;font-size:10.6px;line-height:14px;font-weight:normal;color:#3b63f0;letter-spacing:-0.103px;white-space:nowrap;">View collected amount</div>
<svg class="abs" style="left:764.5px;top:375.6px" width="7" height="9" viewBox="0 0 7 9" fill="none" stroke="#3b63f0" stroke-width="1.1" stroke-linecap="round" stroke-linejoin="round"><path d="M1.6 1.2 L5 4.5 L1.6 7.8"/></svg>
<!--/CARD-->
  </div>
  <div class="abs" style="left:196px;top:458px;width:787px;height:20px;background:#fff;border-radius:8px 8px 0 0"></div>
  <!--HELP-->
<div class="abs" style="left:886.8px;top:422px;width:100.2px;height:29.4px;border-radius:14.7px;background:#324467;box-shadow:0 2px 5px rgba(20,30,60,.35)"></div>
<svg class="abs" style="left:898.8px;top:431.2px" width="11" height="11" viewBox="0 0 11 11" fill="none" stroke="#fff" stroke-width="1" stroke-linecap="round" stroke-linejoin="round"><path d="M1.4 7 V5.4 Q1.4 1.4 5.5 1.4 Q9.6 1.4 9.6 5.4 V7"/><rect x="1.4" y="6.2" width="2" height="3.4" rx=".8"/><rect x="7.6" y="6.2" width="2" height="3.4" rx=".8"/></svg>
<div class="abs" style="left:915.3px;top:431px;font-size:9px;line-height:12px;font-weight:bold;color:#fff;white-space:nowrap;letter-spacing:-0.464px">Help &amp; Support</div>
<!--/HELP-->
</div>
<div id="vscroll"><div class="thumb"></div>
  <svg class="abs" style="left:0;top:0" width="10.5" height="12"><path d="M2.7 8 L5.3 5.1 L7.9 8Z" fill="#fff"/></svg>
  <svg class="abs" style="left:0;top:452px" width="10.5" height="12"><path d="M2.9 4.5 L5.5 7.4 L8.1 4.5Z" fill="#fff"/></svg>
</div>

<!-- ================= TASKBAR ================= -->
<div id="taskbar"><div class="abs" style="left:0;top:0;width:1024px;height:1px;background:#9aa2a8"></div>
  <!--TASKBAR-->
<svg class="abs" style="left:13.0px;top:9.0px" width="17" height="16" viewBox="0 0 17 16" ><defs><linearGradient id="mn" x1="0" y1="0" x2="0" y2="1"><stop offset="0" stop-color="#f8b62a"/><stop offset="1" stop-color="#f07a12"/></linearGradient></defs><path d="M0.6 8.6 Q5 11.4 9.6 8 Q12.6 5.4 13 0.6 Q17.4 5 15 10.4 Q12 15.4 6.6 14.4 Q2.2 13.2 0.6 8.6Z" fill="url(#mn)"/></svg>
<svg class="abs" style="left:20.6px;top:4.7px" width="11" height="11" viewBox="0 0 11 11" ><circle cx="5.5" cy="5.5" r="5.3" fill="#f79aa8"/><text x="5.5" y="8.7" font-size="8.8" fill="#2a1a1a" text-anchor="middle" font-family="Liberation Sans, sans-serif">7</text></svg>
<div class="abs" style="left:34.3px;top:5.2px;font-size:8.8px;line-height:12px;color:#fff;white-space:nowrap;letter-spacing:-0.666px;font-weight:normal">28°C</div>
<div class="abs" style="left:34.3px;top:15.8px;font-size:8.8px;line-height:12px;color:#d0d4d8;white-space:nowrap;letter-spacing:-0.546px;font-weight:normal">Clear</div>
<svg class="abs" style="left:201.5px;top:8.8px" width="16" height="16" viewBox="0 0 16 16" ><defs><linearGradient id="wl" x1="0" y1="0" x2="1" y2="1"><stop offset="0" stop-color="#6fd0fb"/><stop offset="1" stop-color="#1a8fe8"/></linearGradient></defs><g fill="url(#wl)"><rect x="0.4" y="0.4" width="7.2" height="7.2"/><rect x="8.4" y="0.4" width="7.2" height="7.2"/><rect x="0.4" y="8.4" width="7.2" height="7.2"/><rect x="8.4" y="8.4" width="7.2" height="7.2"/></g></svg>
<div class="abs" style="left:226.3px;top:5.6px;width:146.1px;height:21.4px;border-radius:10.7px;background:#36474f"></div>
<svg class="abs" style="left:233.5px;top:11.0px" width="11" height="11" viewBox="0 0 11 11" ><circle cx="4.6" cy="4.6" r="3.4" fill="none" stroke="#fff" stroke-width="1.2"/><path d="M7.2 7.2 L9.8 9.8" stroke="#fff" stroke-width="1.3" stroke-linecap="round"/></svg>
<div class="abs" style="left:251.0px;top:10.6px;font-size:9.4px;line-height:12px;color:#fff;white-space:nowrap;letter-spacing:-0.397px;font-weight:normal">Search</div>
<svg class="abs" style="left:334px;top:6px" width="38" height="21" viewBox="334 525 38 21"><defs><clipPath id="pc"><rect x="226.3" y="524.6" width="146.1" height="21.4" rx="10.7"/></clipPath><clipPath id="pl2"><circle cx="345.6" cy="534" r="5.8"/></clipPath></defs><g clip-path="url(#pc)"><ellipse cx="355" cy="542.2" rx="14.2" ry="2.3" fill="#d8b394"/><circle cx="345.6" cy="534" r="5.8" fill="#efe2cc"/><g clip-path="url(#pl2)"><path d="M339 535 Q343 533 345 537 Q346 540 343 541 L338 540Z" fill="#c4553a"/><path d="M341 529 Q345 527 349 529.6 Q346 531.6 343 530.6Z" fill="#8ab4e0"/><path d="M347 531 Q350 532 350.6 536 Q348 537 346.6 534Z" fill="#e8d4a8"/></g><g transform="rotate(38 359 534)"><rect x="352.4" y="530.6" width="13" height="2.6" rx="1" fill="#ddd4f4"/><rect x="352.4" y="534.2" width="13" height="2.6" rx="1" fill="#cfc4ee"/></g><path d="M361.4 530.2 L367.6 531.6 L365.4 533.6 L362 531.8Z" fill="#8f7fd8"/><path d="M357.4 537.6 L354.6 540.6" stroke="#9a8ac8" stroke-width="1"/><circle cx="354" cy="541" r="1.6" fill="#5a3f7a"/><circle cx="354.4" cy="539.6" r="1.1" fill="#3f4fa8"/><path d="M337 531.6 L337.6 532.8 L338.8 533 L337.6 533.4 L337 534.6 L336.4 533.4 L335.2 533 L336.4 532.8Z M339.2 528.4 L339.6 529.2 L340.4 529.4 L339.6 529.7 L339.2 530.5 L338.8 529.7 L338 529.4 L338.8 529.2Z" fill="#f2cf3a"/></g></svg>
<svg class="abs" style="left:380.6px;top:8.6px" width="17" height="15.4" viewBox="0 0 17 15.4" ><rect x="0.6" y="4.6" width="11.8" height="10.2" fill="#6a6a6a"/><rect x="4.4" y="0.4" width="12" height="10.8" fill="#f4f4f4"/><rect x="4.4" y="4.6" width="8" height="6.6" fill="#c9c9c9"/></svg>
<svg class="abs" style="left:410.3px;top:9.4px" width="16" height="14" viewBox="0 0 16 14" ><defs><linearGradient id="cpa" x1="0" y1="0" x2="0.3" y2="1"><stop offset="0" stop-color="#2a86f0"/><stop offset=".35" stop-color="#38c4d8"/><stop offset=".65" stop-color="#a8d44a"/><stop offset="1" stop-color="#f8b03a"/></linearGradient><linearGradient id="cpb" x1="0.6" y1="0" x2="0.2" y2="1"><stop offset="0" stop-color="#8a5af0"/><stop offset=".55" stop-color="#d060d8"/><stop offset="1" stop-color="#f0503a"/></linearGradient></defs><path d="M3.6 0.6 H8.4 Q10 0.6 9.4 2.4 L7.4 9.4 Q6.8 11.4 4.8 11.4 H2.4 Q0.2 11.4 0.8 9 L2 3 Q2.4 0.6 3.6 0.6Z" fill="url(#cpa)"/><path d="M10.6 2.6 H13.4 Q15.8 2.6 15.2 5 L13.8 11 Q13.2 13.4 11.4 13.4 H6.6 Q5.2 13.4 5.8 11.6 L7.8 4.6 Q8.4 2.6 10.6 2.6Z" fill="url(#cpb)"/><path d="M9 3.4 L6.8 10.8" stroke="#1a2a4a" stroke-width="1.1" opacity=".55"/></svg>
<svg class="abs" style="left:439.8px;top:9.3px" width="16.4" height="14.6" viewBox="0 0 16.4 14.6" ><path d="M0.4 1.4 Q0.4 0.4 1.4 0.4 H5.4 L7 2 H15 Q16 2 16 3 V13.6 Q16 14.4 15.2 14.4 H1.2 Q0.4 14.4 0.4 13.6Z" fill="#e9a820"/><path d="M0.4 3.6 H6 L7.4 2.4 H15.2 Q16 2.4 16 3.2 V13.6 Q16 14.4 15.2 14.4 H1.2 Q0.4 14.4 0.4 13.6Z" fill="#fbd650"/><rect x="2.6" y="10.4" width="10.4" height="4" rx=".6" fill="#1a6fd0"/><rect x="3.6" y="10.4" width="8.4" height="1.6" fill="#3a9af0"/></svg>
<svg class="abs" style="left:468.7px;top:8.6px" width="16" height="16" viewBox="0 0 16 16" ><defs><linearGradient id="eg" x1="0" y1="0" x2="0.4" y2="1"><stop offset="0" stop-color="#2a8ae0"/><stop offset="1" stop-color="#0f4fa8"/></linearGradient><linearGradient id="eg2" x1="0" y1="0" x2="1" y2="0"><stop offset="0" stop-color="#2ab8c8"/><stop offset="1" stop-color="#6ad85a"/></linearGradient></defs><circle cx="8" cy="8" r="7.6" fill="url(#eg)"/><path d="M0.6 7 Q1.6 0.6 8.4 0.4 Q15 0.8 15.6 7.6 Q15.4 10.4 12 10.6 Q9.6 10.4 10.4 8.6 Q11 6.2 8 5.6 Q4.6 5.6 3.4 8.6 Q1.4 5.4 0.6 7Z" fill="url(#eg2)"/><path d="M10.4 8.6 Q9.6 10.4 12 10.6 Q14.6 10.6 15.4 9 Q14.6 12.6 11.6 13 Q7.8 12.6 8 9.4 Q8.6 7.4 10.4 8.6Z" fill="#172a35"/><path d="M3.4 8.6 Q3.2 12.8 7.6 15 Q10.8 15.8 13 13.4 Q8.2 14 8 9.4 Q8 7.2 6 7 Q4 7.2 3.4 8.6Z" fill="#1466c0"/></svg>
<svg class="abs" style="left:498.0px;top:8.5px" width="16.2" height="16.2" viewBox="0 0 16.2 16.2" ><defs><linearGradient id="ma" x1="1" y1="0" x2="0" y2="1"><stop offset="0" stop-color="#2a9cf8"/><stop offset=".55" stop-color="#3a62f0"/><stop offset="1" stop-color="#5a2ae8"/></linearGradient></defs><rect width="16.2" height="16.2" rx="1" fill="url(#ma)"/><path d="M2.6 11.4 L6 4.8 M5.8 11.4 L9.2 4.8 M9 11.4 L11.6 4.8 L13 11.4 M10 9.4 H12.6" stroke="#fff" stroke-width="1.5" fill="none" stroke-linejoin="round"/></svg>
<svg class="abs" style="left:527.6px;top:8.3px" width="16" height="16" viewBox="0 0 16 16" ><path d="M8 8 L1.42 4.20 A7.6 7.6 0 0 1 14.58 4.20 Z" fill="#e8453a"/><path d="M8 8 L14.58 4.20 A7.6 7.6 0 0 1 8.00 15.60 Z" fill="#fbc12a"/><path d="M8 8 L8.00 15.60 A7.6 7.6 0 0 1 1.42 4.20 Z" fill="#2aa54a"/><circle cx="8" cy="8" r="3.6" fill="#fff"/><circle cx="8" cy="8" r="2.8" fill="#3a82f0"/><circle cx="12.4" cy="3.6" r="3.4" fill="#0a1418"/><path d="M11 4.2 L13.6 3 M11.4 2.8 L13.4 4.4" stroke="#2a8aa8" stroke-width=".7"/></svg>
<div class="abs" style="left:551.9px;top:3px;width:26.5px;height:26.4px;border-radius:3px;background:#283b46"></div>
<svg class="abs" style="left:556.9px;top:8.3px" width="16" height="16" viewBox="0 0 16 16" ><path d="M8 8 L1.42 4.20 A7.6 7.6 0 0 1 14.58 4.20 Z" fill="#e8453a"/><path d="M8 8 L14.58 4.20 A7.6 7.6 0 0 1 8.00 15.60 Z" fill="#fbc12a"/><path d="M8 8 L8.00 15.60 A7.6 7.6 0 0 1 1.42 4.20 Z" fill="#2aa54a"/><circle cx="8" cy="8" r="3.6" fill="#fff"/><circle cx="8" cy="8" r="2.8" fill="#3a82f0"/><circle cx="12.4" cy="3.6" r="3.4" fill="#a8987a"/><circle cx="12.6" cy="3.8" r="1.6" fill="#3a3026"/><path d="M9.6 2 Q12 0 15 2" stroke="#d8d0c0" stroke-width="1" fill="none"/></svg>
<div class="abs" style="left:559.9px;top:27.2px;width:10.3px;height:2px;border-radius:1px;background:#4cc2ff"></div>
<svg class="abs" style="left:586.1px;top:8.6px" width="16" height="16.4" viewBox="0 0 16 16.4" ><path d="M4.6 3.4 V1.6 Q4.6 0.6 5.6 0.6 H10.4 Q11.4 0.6 11.4 1.6 V3.4" fill="none" stroke="#2ab0e8" stroke-width="1"/><path d="M0.4 4 Q0.4 3 1.4 3 H14.6 Q15.6 3 15.6 4 V13.6 Q15.6 16 13.2 16 H2.8 Q0.4 16 0.4 13.6Z" fill="#f6f6f6"/><rect x="5.2" y="6.6" width="2.5" height="2.5" fill="#f25022"/><rect x="8.3" y="6.6" width="2.5" height="2.5" fill="#7fba00"/><rect x="5.2" y="9.7" width="2.5" height="2.5" fill="#00a4ef"/><rect x="8.3" y="9.7" width="2.5" height="2.5" fill="#ffb900"/></svg>
<svg class="abs" style="left:616.3px;top:8.6px" width="15" height="15.6" viewBox="0 0 15 15.6" ><path d="M7.5 0.4 L14.4 4.2 V11.4 L7.5 15.2 L0.6 11.4 V4.2Z" fill="#4c5054"/><path d="M7.5 0.4 L14.4 4.2 L7.5 8Z" fill="#6a6e72"/><path d="M7.5 3.4 L11.8 10.8 H3.6Z" fill="#aeb2b6"/><path d="M7.5 3.4 L7.5 10.8 H3.6Z" fill="#7e8286"/><path d="M3.6 10.8 H11.8 L7.5 13.4Z" fill="#2c2e30"/></svg>
<svg class="abs" style="left:646.1px;top:8.2px" width="14" height="16" viewBox="0 0 14 16" ><path d="M3.2 1.4 L4.6 0.4 H9.4 L10.8 1.4 L12.6 1.2 L13.6 3.6 L13 5 L13.4 6.6 L12.2 11 Q11.2 13.4 7 15.8 Q2.8 13.4 1.8 11 L0.6 6.6 L1 5 L0.4 3.6 L1.4 1.2Z" fill="#f2502a"/><path d="M3.4 4 L5.2 3.4 L7 4 L8.8 3.4 L10.6 4 L10.2 6 L11 8 L9 10.4 L7 12.4 L5 10.4 L3 8 L3.8 6Z" fill="#fff"/><path d="M5 6.2 L6.2 7 M9 6.2 L7.8 7 M6 9.6 L7 10.4 L8 9.6" stroke="#f2502a" stroke-width="0.9" fill="none"/></svg>
<div class="abs" style="left:651.1px;top:27.3px;width:4.1px;height:1.8px;border-radius:1px;background:#8a949a"></div>
<svg class="abs" style="left:673.5px;top:9.5px" width="17" height="15.4" viewBox="0 0 17 15.4" ><path d="M8.6 1 A6.6 6.6 0 1 1 5 13.2 L1.2 14.4 L2.4 10.8 A6.6 6.6 0 0 1 8.6 1Z" fill="none" stroke="#2bd366" stroke-width="1.9" stroke-linejoin="round"/><path d="M6 4.6 Q5.4 7.4 8 9.6 Q10.2 11.2 11.6 10 L10.6 8.6 L9.4 9 Q7.8 8.2 7.4 6.6 L8 5.6 L7 4.2Z" fill="#2bd366"/></svg>
<div class="abs" style="left:679.3px;top:5.3px;width:17.9px;height:10.5px;border-radius:5.25px;background:#55bff5;color:#0a2436;font-size:8.2px;line-height:10.7px;text-align:center;letter-spacing:-0.3px">99+</div>
<div class="abs" style="left:680.6px;top:27.3px;width:4.1px;height:1.8px;border-radius:1px;background:#8a949a"></div>
<svg class="abs" style="left:704.4px;top:9.2px" width="15.4" height="14.4" viewBox="0 0 15.4 14.4" ><defs><linearGradient id="plk" x1="0" y1="0" x2="0" y2="1"><stop offset="0" stop-color="#1a78d8"/><stop offset="1" stop-color="#2aa8e8"/></linearGradient></defs><rect x="0.2" y="0.2" width="9.8" height="14" rx="1" fill="url(#plk)"/><rect x="6" y="6" width="9.2" height="5.8" rx=".6" fill="#1565c0"/><rect x="0.2" y="9" width="9.8" height="1.2" fill="#1565c0" opacity=".5"/></svg>
<div class="abs" style="left:710.9px;top:5.6px;width:13.7px;height:10.2px;border-radius:5.1px;background:#55bff5;color:#0a2436;font-size:8.2px;line-height:10.4px;text-align:center;letter-spacing:-0.2px">97</div>
<svg class="abs" style="left:733.0px;top:8.4px" width="16.4" height="16.4" viewBox="0 0 16.4 16.4" ><rect width="16.4" height="16.4" rx="1" fill="#107c10"/><circle cx="8.2" cy="8.4" r="6.2" fill="#fff"/><path d="M8.2 5.2 Q5.2 2 3.2 4.6 Q5.4 7.4 3.4 12.4 Q6 8 8.2 7.4 Q10.4 8 13 12.4 Q11 7.4 13.2 4.6 Q11.2 2 8.2 5.2Z" fill="#107c10"/><path d="M4.6 2.6 Q8.2 0.6 11.8 2.6 L8.2 3.4Z" fill="#107c10"/></svg>
<svg class="abs" style="left:829.5px;top:13.3px" width="9" height="6" viewBox="0 0 9 6" ><path d="M1 5 L4.5 1.4 L8 5" fill="none" stroke="#fff" stroke-width="1.2"/></svg>
<svg class="abs" style="left:849.5px;top:12.6px" width="12" height="8" viewBox="0 0 12 8" ><path d="M3 7.4 Q0.6 7.4 0.6 5.4 Q0.6 3.6 2.6 3.4 Q3.2 0.8 6 0.8 Q8.4 0.8 9 3 Q11.4 3 11.4 5.2 Q11.4 7.4 9.2 7.4Z" fill="#f0f0f0"/></svg>
<div class="abs" style="left:873.2px;top:5.4px;font-size:8.6px;line-height:12px;color:#fff;white-space:nowrap;letter-spacing:-1.045px;font-weight:normal">ENG</div>
<div class="abs" style="left:877.4px;top:15.9px;font-size:8.6px;line-height:12px;color:#fff;white-space:nowrap;letter-spacing:-0.450px;font-weight:normal">IN</div>
<svg class="abs" style="left:900.0px;top:12.1px" width="12" height="9" viewBox="0 0 12 9" ><path d="M0.8 3.2 Q6 -1.4 11.2 3.2 M2.6 5 Q6 2 9.4 5 M4.4 6.8 Q6 5.4 7.6 6.8" fill="none" stroke="#fff" stroke-width="1"/><circle cx="6" cy="8" r=".8" fill="#fff"/></svg>
<svg class="abs" style="left:916.0px;top:11.6px" width="12" height="10" viewBox="0 0 12 10" ><path d="M0.8 3.6 H2.6 L5.2 1.2 V8.8 L2.6 6.4 H0.8Z" fill="none" stroke="#fff" stroke-width="0.9"/><path d="M6.8 3.2 Q8 5 6.8 6.8 M8.4 2 Q10.4 5 8.4 8 M10 1 Q12.4 5 10 9" fill="none" stroke="#fff" stroke-width="0.9"/></svg>
<svg class="abs" style="left:932.0px;top:11.9px" width="12" height="9" viewBox="0 0 12 9" ><rect x="1.4" y="2.6" width="8.6" height="5.4" rx="1" fill="none" stroke="#fff" stroke-width="0.9"/><rect x="2.6" y="3.8" width="5" height="3" fill="#fff"/><path d="M10.4 4.4 V6.4 M2 0.6 V3 M0.8 1.8 H3.2" stroke="#fff" stroke-width="0.9"/></svg>
<div class="abs" style="left:976.4px;top:5.4px;font-size:8.6px;line-height:12px;color:#fff;white-space:nowrap;letter-spacing:-0.444px;font-weight:normal">20:00</div>
<div class="abs" style="left:954.5px;top:15.9px;font-size:8.6px;line-height:12px;color:#fff;white-space:nowrap;letter-spacing:-0.279px;font-weight:normal">18-02-2025</div>
<svg class="abs" style="left:1000.8px;top:10.6px" width="11" height="12" viewBox="0 0 11 12" ><path d="M2 8.6 Q3 7.4 3 5 Q3 2 5.5 2 Q8 2 8 5 Q8 7.4 9 8.6Z" fill="#fff"/><path d="M4.4 9.8 Q5.5 11 6.6 9.8" fill="#fff"/><text x="8.4" y="4.2" font-size="4.4" fill="#fff" font-family="Liberation Sans, sans-serif">z</text></svg>
<!--/TASKBAR-->
</div>

</div>
</body>
</html>
